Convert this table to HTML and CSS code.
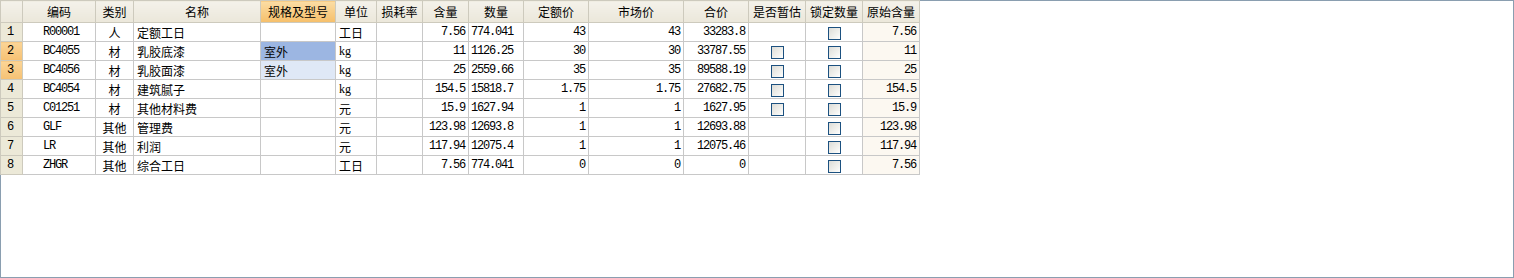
FILE: index.html
```html
<!DOCTYPE html>
<html lang="zh">
<head>
<meta charset="utf-8">
<link rel="stylesheet" href="styles.css">
</head>
<body>
<div class="frame">
<table class="grid">
<colgroup>
<col class="w22"><col class="w73"><col class="w38"><col class="w127"><col class="w75"><col class="w41"><col class="w46"><col class="w46"><col class="w55"><col class="w65"><col class="w95"><col class="w65"><col class="w57"><col class="w57"><col class="w57">
</colgroup>
<thead>
<tr>
<th class="corner"></th><th>编码</th><th>类别</th><th>名称</th><th class="hl">规格及型号</th><th>单位</th><th>损耗率</th><th>含量</th><th>数量</th><th>定额价</th><th>市场价</th><th>合价</th><th>是否暂估</th><th>锁定数量</th><th>原始含量</th>
</tr>
</thead>
<tbody>
<tr><td class="rn">1</td><td class="code">R00001</td><td class="c">人</td><td class="l">定额工日</td><td></td><td class="l">工日</td><td></td><td class="n">7.56</td><td class="nl">774.041</td><td class="n">43</td><td class="n">43</td><td class="n">33283.8</td><td></td><td class="cb"><span class="box"></span></td><td class="n orig">7.56</td></tr>
<tr><td class="rn sel">2</td><td class="code">BC4055</td><td class="c">材</td><td class="l">乳胶底漆</td><td class="l cur">室外</td><td class="l unit">kg</td><td></td><td class="n">11</td><td class="nl">1126.25</td><td class="n">30</td><td class="n">30</td><td class="n">33787.55</td><td class="cb"><span class="box"></span></td><td class="cb"><span class="box"></span></td><td class="n orig">11</td></tr>
<tr><td class="rn sel">3</td><td class="code">BC4056</td><td class="c">材</td><td class="l">乳胶面漆</td><td class="l light">室外</td><td class="l unit">kg</td><td></td><td class="n">25</td><td class="nl">2559.66</td><td class="n">35</td><td class="n">35</td><td class="n">89588.19</td><td class="cb"><span class="box"></span></td><td class="cb"><span class="box"></span></td><td class="n orig">25</td></tr>
<tr><td class="rn">4</td><td class="code">BC4054</td><td class="c">材</td><td class="l">建筑腻子</td><td></td><td class="l unit">kg</td><td></td><td class="n">154.5</td><td class="nl">15818.7</td><td class="n">1.75</td><td class="n">1.75</td><td class="n">27682.75</td><td class="cb"><span class="box"></span></td><td class="cb"><span class="box"></span></td><td class="n orig">154.5</td></tr>
<tr><td class="rn">5</td><td class="code">C01251</td><td class="c">材</td><td class="l">其他材料费</td><td></td><td class="l">元</td><td></td><td class="n">15.9</td><td class="nl">1627.94</td><td class="n">1</td><td class="n">1</td><td class="n">1627.95</td><td class="cb"><span class="box"></span></td><td class="cb"><span class="box"></span></td><td class="n orig">15.9</td></tr>
<tr><td class="rn">6</td><td class="code">GLF</td><td class="c">其他</td><td class="l">管理费</td><td></td><td class="l">元</td><td></td><td class="n">123.98</td><td class="nl">12693.8</td><td class="n">1</td><td class="n">1</td><td class="n">12693.88</td><td></td><td class="cb"><span class="box"></span></td><td class="n orig">123.98</td></tr>
<tr><td class="rn">7</td><td class="code">LR</td><td class="c">其他</td><td class="l">利润</td><td></td><td class="l">元</td><td></td><td class="n">117.94</td><td class="nl">12075.4</td><td class="n">1</td><td class="n">1</td><td class="n">12075.46</td><td></td><td class="cb"><span class="box"></span></td><td class="n orig">117.94</td></tr>
<tr><td class="rn">8</td><td class="code">ZHGR</td><td class="c">其他</td><td class="l">综合工日</td><td></td><td class="l">工日</td><td></td><td class="n">7.56</td><td class="nl">774.041</td><td class="n">0</td><td class="n">0</td><td class="n">0</td><td></td><td class="cb"><span class="box"></span></td><td class="n orig">7.56</td></tr>
</tbody>
</table>
</div>
</body>
</html>
```
FILE: styles.css
```css
html, body {
  margin: 0;
  padding: 0;
  background: #ffffff;
}
.frame {
  box-sizing: border-box;
  width: 1514px;
  height: 278px;
  border: 1px solid #8a9eb0;
  background: #ffffff;
}
.grid {
  border-collapse: collapse;
  table-layout: fixed;
  width: 919px;
  margin: -1px 0 0 -1px;
  font-family: "Noto Sans CJK SC", "Liberation Sans", sans-serif;
  font-size: 12px;
  color: #000;
}
.w22 { width: 22px; }
.w73 { width: 73px; }
.w38 { width: 38px; }
.w127 { width: 127px; }
.w75 { width: 75px; }
.w41 { width: 41px; }
.w46 { width: 46px; }
.w55 { width: 55px; }
.w65 { width: 65px; }
.w95 { width: 95px; }
.w57 { width: 57px; }
.grid th, .grid td {
  border: 1px solid #c8c8c8;
  padding: 0 3px;
  white-space: nowrap;
  overflow: hidden;
  line-height: 17px;
}
.grid th {
  height: 21px;
  font-weight: normal;
  text-align: center;
  background: linear-gradient(#f4f2ea, #ebe7da);
  border-color: #cdcabd;
  padding: 0 1px;
}
.grid th.hl {
  background: linear-gradient(#fbdda4, #f6bf6a);
}
.grid td {
  height: 18px;
  padding-top: 0;
  padding-bottom: 0;
}
.grid td.rn {
  background: #ece9d8;
  text-align: left;
  padding-left: 6px;
  font-family: "Liberation Mono", monospace;
  letter-spacing: -1px;
  border-color: #cdcabd;
}
.grid td.rn.sel {
  background: linear-gradient(#fbd597, #f6c173);
}
.grid td.code {
  text-align: left;
  font-family: "Liberation Mono", monospace;
  letter-spacing: -1.2px;
  padding-left: 20px;
}
.c { text-align: center; }
.l { text-align: left; }
.unit {
  font-family: "Liberation Serif", serif;
}
.n {
  text-align: right;
  font-family: "Liberation Mono", monospace;
  letter-spacing: -1.2px;
}
.grid td.nl {
  text-align: left;
  font-family: "Liberation Mono", monospace;
  letter-spacing: -1.2px;
  padding-left: 2px;
}
.grid td.cur { background: #9cb6e2; }
.grid td.light { background: #dfe8f6; }
.grid td.orig { background: #fcf8f1; }
.grid td.cb {
  text-align: center;
  padding: 0;
}
.box {
  display: inline-block;
  box-sizing: border-box;
  width: 13px;
  height: 13px;
  border: 1px solid #1c5180;
  background: linear-gradient(135deg, #dcdcd7 0%, #f4f4f1 70%, #ffffff 100%);
  vertical-align: middle;
  margin-top: -2px;
}
```
